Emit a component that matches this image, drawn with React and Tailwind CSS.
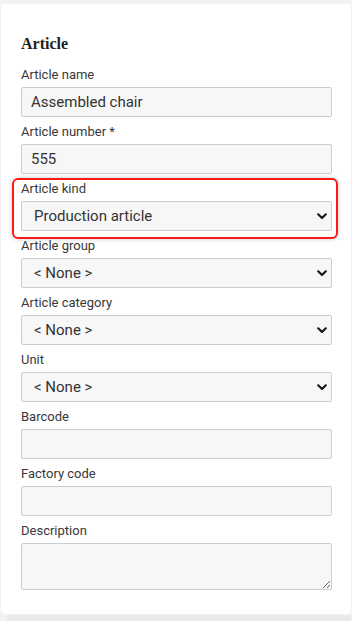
import { ChevronDown } from "lucide-react";

const fields = [
  { label: "Article name", type: "input", value: "Assembled chair" },
  { label: "Article number *", type: "input", value: "555" },
  { label: "Article kind", type: "select", value: "Production article", highlight: true },
  { label: "Article group", type: "select", value: "< None >" },
  { label: "Article category", type: "select", value: "< None >" },
  { label: "Unit", type: "select", value: "< None >" },
  { label: "Barcode", type: "input", value: "" },
  { label: "Factory code", type: "input", value: "" },
  { label: "Description", type: "textarea", value: "" },
];

function Chevron() {
  return (
    <svg width="10" height="7" viewBox="0 0 10 7" className="pointer-events-none absolute right-[5px] top-[12px]">
      <path d="M1.2 1.3 L5 5 L8.8 1.3" fill="none" stroke="#1a1a1a" strokeWidth="2.2" strokeLinecap="round" strokeLinejoin="round" />
    </svg>
  );
}

function Field({ field }) {
  const box = "w-full border border-[#cdcdcd] bg-[#f7f7f7] rounded-[2px] text-[15px] text-[#333] outline-none";
  return (
    <div className="relative mb-[7px] last:mb-0">
      {field.highlight && (
        <div className="pointer-events-none absolute -left-[9px] -right-[6px] -top-[3px] -bottom-[8px] rounded-[6px] border-2 border-[#ff1a1a] shadow-[0_0_5px_rgba(0,0,0,0.2)]" />
      )}
      <label className="block text-[13px] leading-[16px] text-[#383838] mb-[4px]">{field.label}</label>
      {field.type === "input" && (
        <input readOnly value={field.value} className={`${box} h-[30px] pl-[9px]`} />
      )}
      {field.type === "select" && (
        <div className="relative">
          <select
            value={field.value}
            onChange={() => {}}
            className={`${box} h-[30px] pl-[12px] appearance-none`}
          >
            <option>{field.value}</option>
          </select>
          <Chevron />
        </div>
      )}
      {field.type === "textarea" && (
        <textarea readOnly value={field.value} className={`${box} h-[47px] block pl-[9px]`} />
      )}
    </div>
  );
}

export default function App() {
  return (
    <div className="min-h-screen bg-[#f2f2f2] pt-[4px] pl-[1px] pr-[1px] font-['Roboto',sans-serif]">
      <div className="bg-white rounded-[4px] pt-[30px] pb-[24px] pl-[20px] pr-[19px]">
        <h2 className="font-['Liberation_Serif',serif] font-bold text-[16px] leading-[20px] text-[#222] mb-[13px]">
          Article
        </h2>
        {fields.map((f) => (
          <Field key={f.label} field={f} />
        ))}
      </div>
      <div className="ml-[6px] mt-[1px] h-[8px] bg-[#eaeaea]" />
    </div>
  );
}
